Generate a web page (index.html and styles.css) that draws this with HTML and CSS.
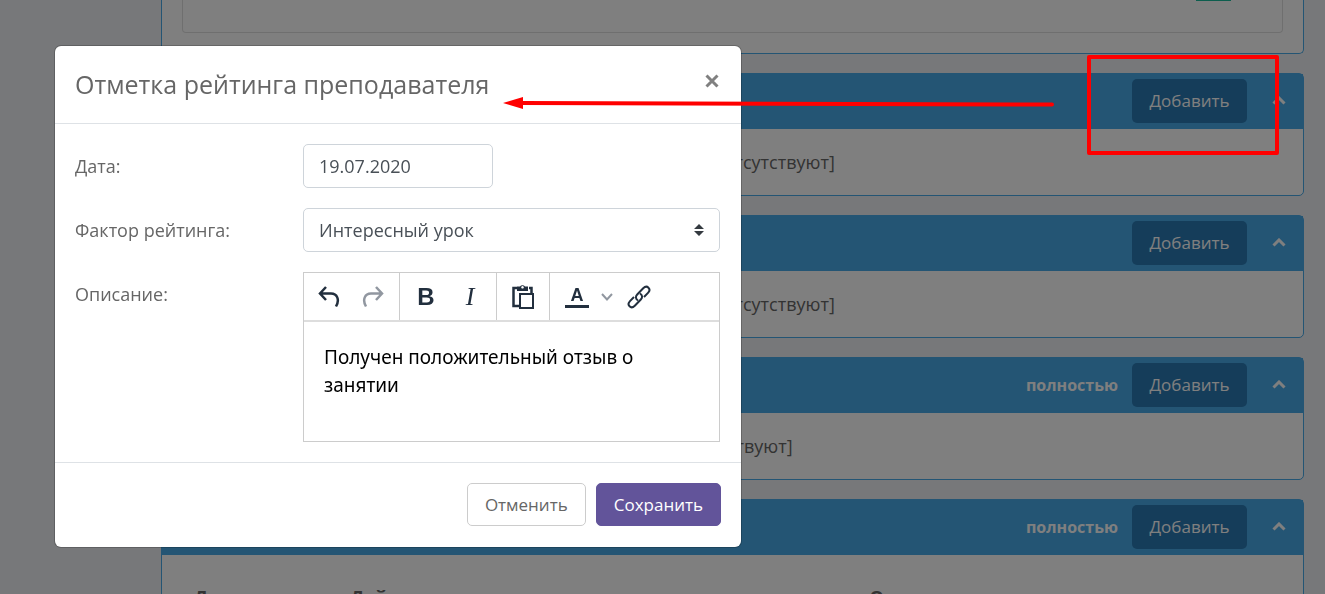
FILE: index.html
```
<!DOCTYPE html>
<html lang="ru">
<head>
    <meta charset="UTF-8">
    <meta name="viewport" content="width=device-width, initial-scale=1.0">
    <title>Отметка рейтинга преподавателя</title>
    <link rel="stylesheet" href="styles.css">
</head>
<body>
    <main class="page">
        <section class="card card-first">
            <div class="card-inner">
                <span class="badge"></span>
            </div>
        </section>
        <section class="card">
            <div class="card-header">
                <button class="add-button" type="button">Добавить</button>
                <button class="toggle-button" type="button" aria-label="Свернуть">
                    <svg width="14" height="9" viewBox="0 0 14 9"><path d="M1.5 7.5L7 2l5.500 5.500"/></svg>
                </button>
            </div>
            <div class="card-body">[Рейтинги отсутствуют]</div>
        </section>
        <section class="card">
            <div class="card-header">
                <button class="add-button" type="button">Добавить</button>
                <button class="toggle-button" type="button" aria-label="Свернуть">
                    <svg width="14" height="9" viewBox="0 0 14 9"><path d="M1.5 7.5L7 2l5.500 5.500"/></svg>
                </button>
            </div>
            <div class="card-body">[Рейтинги отсутствуют]</div>
        </section>
        <section class="card">
            <div class="card-header">
                <a class="full-link" href="#">полностью</a>
                <button class="add-button" type="button">Добавить</button>
                <button class="toggle-button" type="button" aria-label="Свернуть">
                    <svg width="14" height="9" viewBox="0 0 14 9"><path d="M1.5 7.5L7 2l5.500 5.500"/></svg>
                </button>
            </div>
            <div class="card-body">[Отсутствуют]</div>
        </section>
        <section class="card">
            <div class="card-header">
                <a class="full-link" href="#">полностью</a>
                <button class="add-button" type="button">Добавить</button>
                <button class="toggle-button" type="button" aria-label="Свернуть">
                    <svg width="14" height="9" viewBox="0 0 14 9"><path d="M1.5 7.5L7 2l5.500 5.500"/></svg>
                </button>
            </div>
            <table class="card-table">
                <thead>
                    <tr>
                        <th class="col-date">Дата</th>
                        <th class="col-action">Действие</th>
                        <th>Описание</th>
                    </tr>
                </thead>
            </table>
        </section>
    </main>

    <div class="backdrop">
        <form class="modal" role="dialog" aria-labelledby="modal-title">
            <div class="modal-header">
                <h2 class="modal-title" id="modal-title">Отметка рейтинга преподавателя</h2>
                <button class="close-button" type="button" aria-label="Закрыть">
                    <svg width="14" height="14" viewBox="0 0 14 14"><path d="M1.500 1.500l11 11M12.500 1.500l-11 11"/></svg>
                </button>
            </div>
            <div class="modal-body">
                <label for="date">Дата:</label>
                <input class="field field-date" id="date" type="text" value="19.07.2020">

                <label for="factor">Фактор рейтинга:</label>
                <div class="select-wrap">
                    <select class="field" id="factor">
                        <option>Интересный урок</option>
                    </select>
                    <svg class="select-arrows" width="10" height="12" viewBox="0 0 10 12"><path d="M0 5l5-5 5 5zM0 7l5 5 5-5z"/></svg>
                </div>

                <label for="description">Описание:</label>
                <div class="editor">
                    <div class="toolbar">
                        <div class="tool-group">
                            <button class="tool" type="button" aria-label="Отменить действие">
                                <svg width="22" height="22" viewBox="0 0 22 22"><path d="M8 1L2 7.500 8 14M2.500 7.500H13c6 0 9 6 5 13"/></svg>
                            </button>
                            <button class="tool tool-off" type="button" aria-label="Повторить действие">
                                <svg width="22" height="22" viewBox="0 0 22 22"><path d="M14 1l6 6.500L14 14M19.500 7.500H9c-6 0-9 6-5 13"/></svg>
                            </button>
                        </div>
                        <div class="tool-group">
                            <button class="tool tool-bold" type="button" aria-label="Полужирный">B</button>
                            <button class="tool tool-italic" type="button" aria-label="Курсив">I</button>
                        </div>
                        <div class="tool-group">
                            <button class="tool" type="button" aria-label="Вставить">
                                <svg width="24" height="26" viewBox="0 0 24 26"><path d="M6 4H2.500v18H8M18 4h2.500v5"/><rect class="thin" x="9" y="10" width="13" height="14"/><path class="solid" fill-rule="evenodd" d="M6 7V2.500h3a3 3 0 0 1 5 0h3V7zM11.500 2a1.300 1.300 0 1 0 .01 0z"/></svg>
                            </button>
                        </div>
                        <div class="tool-group">
                            <button class="tool tool-color" type="button" aria-label="Цвет текста">A</button>
                            <button class="tool tool-more" type="button" aria-label="Выбрать цвет">
                                <svg width="12" height="8" viewBox="0 0 12 8"><path d="M1 1l5 5.500L11 1"/></svg>
                            </button>
                            <button class="tool tool-link" type="button" aria-label="Ссылка">
                                <svg width="24" height="24" viewBox="0 0 24 24"><path class="thin" d="M11 15.500c-2.500-1.500-2.700-4-.8-6l6-6.200c3.900-3.900 8.500.7 4.800 4.600L17 12M13 8.500c2.500 1.500 2.700 4 .8 6l-6 6.200c-3.900 3.900-8.500-.7-4.800-4.600L7 12"/></svg>
                            </button>
                        </div>
                    </div>
                    <textarea class="editor-text" id="description">Получен положительный отзыв о занятии</textarea>
                </div>
            </div>
            <div class="modal-footer">
                <button class="cancel-button" type="button">Отменить</button>
                <button class="save-button" type="submit">Сохранить</button>
            </div>
        </form>
    </div>

    <!-- hint: where the dialog is opened from -->
    <div class="hint-frame"></div>
    <svg class="hint-arrow" width="552" height="14" viewBox="0 0 552 14">
        <path class="hint-line" d="M19 6L549 7.500"/>
        <path class="hint-head" d="M0 6L20 0v12z"/>
    </svg>
</body>
</html>
```
FILE: styles.css
```
* {
    box-sizing: border-box;
}
body {
    font-family: "Open Sans", "Noto Sans", sans-serif;
    font-size: 18px;
    color: #666;
    background-color: #eef0f4;
    margin: 0;
}
button, input, select, textarea {
    font-family: inherit;
    font-size: inherit;
    color: inherit;
    margin: 0;
}
button {
    cursor: pointer;
}
path, rect {
    fill: none;
    stroke: currentColor;
}

/* page */
.page {
    display: flex;
    flex-direction: column;
    gap: 19px;
    height: 100vh;
    padding: 0 21px 0 161px;
    overflow: hidden;
}
.card {
    flex-shrink: 0;
    background-color: #fff;
    border: 1px solid #48aae8;
    border-radius: 5px;
}
.card-first {
    border-top: none;
    border-top-left-radius: 0;
    border-top-right-radius: 0;
    padding: 0 20px 20px;
}
.card-inner {
    display: flex;
    justify-content: flex-end;
    height: 33px;
    padding-right: 51px;
    border: 1px solid #dfdfdf;
    border-top: none;
    border-radius: 0 0 4px 4px;
}
.badge {
    width: 35px;
    height: 1px;
    background-color: #1abc9c;
}
.card-header {
    display: flex;
    justify-content: flex-end;
    align-items: center;
    height: 55px;
    padding: 0 17px 2px;
    background-color: #48aae8;
    color: #fff;
}
.full-link {
    color: #fff;
    font-size: 16px;
    font-weight: bold;
    text-decoration: none;
    margin-right: 14px;
}
.add-button {
    min-width: 115px;
    height: 44px;
    padding: 0 16px;
    font-size: 17px;
    background-color: #2a7ab4;
    border: none;
    border-radius: 5px;
}
.toggle-button {
    display: flex;
    margin-left: 25px;
    padding: 0;
    background: none;
    border: none;
}
.toggle-button path {
    stroke-width: 3;
}
.card-body {
    display: flex;
    align-items: center;
    justify-content: center;
    height: 66px;
    color: #666;
}
.card-table {
    width: 100%;
    padding: 18px 16px;
    text-align: left;
}
.card-table th {
    padding: 10px 14px;
}
.col-date {
    width: 14%;
}
.col-action {
    width: 47%;
}

/* modal */
.backdrop {
    position: fixed;
    inset: 0;
    padding: 46px 55px;
    background-color: rgba(0, 0, 0, 0.5);
}
.modal {
    max-width: 686px;
    background-color: #fff;
    border-radius: 6px;
    box-shadow: 0 0 0 1px rgba(0, 0, 0, 0.2);
}
.modal-header {
    display: flex;
    justify-content: space-between;
    align-items: center;
    height: 78px;
    padding: 0 22px 2px 20px;
    border-bottom: 1px solid #dee2e6;
}
.modal-title {
    font-size: 25px;
    font-weight: normal;
    margin: 0;
}
.close-button {
    display: flex;
    padding: 0;
    margin-bottom: 5px;
    color: #808080;
    background: none;
    border: none;
}
.close-button path {
    stroke-width: 3;
}
.modal-body {
    display: grid;
    grid-template-columns: 228px 1fr;
    row-gap: 20px;
    padding: 20px 21px 20px 20px;
}
.modal-body label {
    line-height: 44px;
}
.field {
    width: 100%;
    height: 44px;
    padding: 0 15px;
    color: #495057;
    background-color: #fff;
    border: 1px solid #ced4da;
    border-radius: 5px;
}
.field-date {
    width: 190px;
}
.select-wrap {
    position: relative;
}
select.field {
    appearance: none;
}
.select-arrows {
    position: absolute;
    right: 16px;
    top: 16px;
    pointer-events: none;
}
.select-arrows path {
    fill: #343a40;
    stroke: none;
}
.editor {
    border: 1px solid #ccc;
}
.toolbar {
    display: flex;
    height: 49px;
    color: #222f3e;
    border-bottom: 2px solid #ddd;
}
.tool-group {
    display: flex;
    align-items: center;
    gap: 2px;
    padding: 0 5px 0 4px;
}
.tool-group + .tool-group {
    padding: 0 5px;
    border-left: 1px solid #ccc;
}
.tool {
    display: flex;
    align-items: center;
    justify-content: center;
    width: 42px;
    height: 40px;
    padding: 0;
    background: none;
    border: none;
}
.tool path, .tool rect {
    stroke-width: 2.5;
}
.tool .thin {
    stroke-width: 2;
}
.tool .solid {
    fill: currentColor;
    stroke: none;
}
.tool-off {
    color: #9197a0;
}
.tool-bold {
    font-family: "Liberation Sans", sans-serif;
    font-size: 24px;
    font-weight: bold;
}
.tool-italic {
    font-family: "Liberation Serif", serif;
    font-size: 26px;
    font-style: italic;
}
.tool-color {
    width: 24px;
    height: 22px;
    margin: 0 10px;
    font-family: "Liberation Sans", sans-serif;
    font-size: 18px;
    font-weight: bold;
    border-bottom: 3px solid #222f3e;
}
.tool-more {
    width: 12px;
    color: #9197a0;
}
.tool-more path {
    stroke-width: 2;
}
.tool-link {
    width: 48px;
}
.editor-text {
    display: block;
    width: 100%;
    height: 119px;
    padding: 21px 20px;
    font-family: "Noto Sans", sans-serif;
    font-size: 19px;
    line-height: 28px;
    color: #000;
    border: none;
    outline: none;
    resize: none;
}
.modal-footer {
    display: flex;
    justify-content: flex-end;
    gap: 10px;
    padding: 20px 20px 21px;
    border-top: 1px solid #dee2e6;
}
.cancel-button, .save-button {
    height: 43px;
    padding: 0 17px;
    font-size: 17px;
    border: 1px solid #ccc;
    border-radius: 5px;
    background-color: #fff;
}
.save-button {
    color: #fff;
    background-color: #62549a;
    border-color: #62549a;
}

/* hint */
.hint-frame {
    position: absolute;
    top: 55px;
    right: 46px;
    width: 192px;
    height: 100px;
    border: 4px solid #f00;
    border-radius: 2px;
}
.hint-arrow {
    position: absolute;
    top: 97px;
    left: 503px;
}
.hint-line {
    stroke: #f00;
    stroke-width: 4;
    stroke-linecap: round;
}
.hint-head {
    fill: #f00;
    stroke: none;
}
```
